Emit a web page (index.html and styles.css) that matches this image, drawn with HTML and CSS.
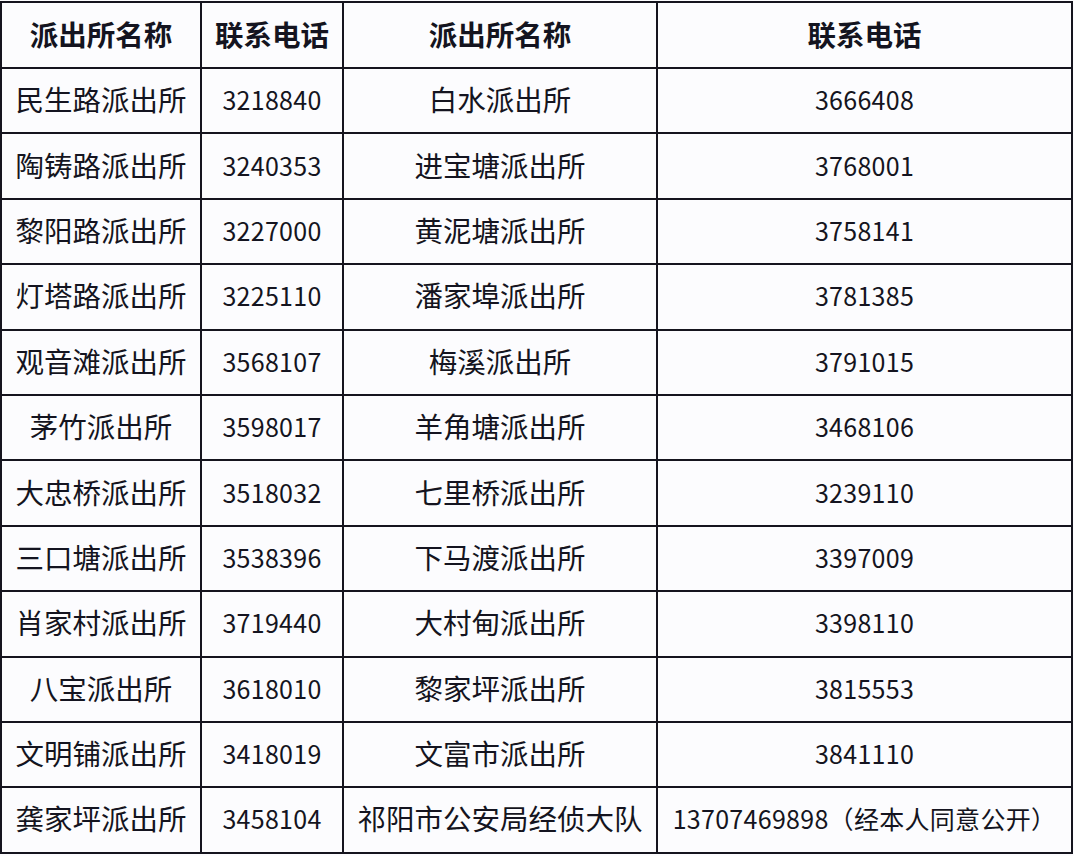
FILE: index.html
```html
<!DOCTYPE html>
<html lang="zh-CN">
<head>
<meta charset="utf-8">
<title>派出所联系电话</title>
<link rel="stylesheet" href="styles.css">
</head>
<body>
<table class="phone-table">
  <colgroup>
    <col class="c1"><col class="c2"><col class="c3"><col class="c4">
  </colgroup>
  <thead>
    <tr class="head-row">
      <th>派出所名称</th><th>联系电话</th><th>派出所名称</th><th>联系电话</th>
    </tr>
  </thead>
  <tbody>
    <tr><td>民生路派出所</td><td class="num">3218840</td><td>白水派出所</td><td class="num">3666408</td></tr>
    <tr><td>陶铸路派出所</td><td class="num">3240353</td><td>进宝塘派出所</td><td class="num">3768001</td></tr>
    <tr><td>黎阳路派出所</td><td class="num">3227000</td><td>黄泥塘派出所</td><td class="num">3758141</td></tr>
    <tr><td>灯塔路派出所</td><td class="num">3225110</td><td>潘家埠派出所</td><td class="num">3781385</td></tr>
    <tr><td>观音滩派出所</td><td class="num">3568107</td><td>梅溪派出所</td><td class="num">3791015</td></tr>
    <tr><td>茅竹派出所</td><td class="num">3598017</td><td>羊角塘派出所</td><td class="num">3468106</td></tr>
    <tr><td>大忠桥派出所</td><td class="num">3518032</td><td>七里桥派出所</td><td class="num">3239110</td></tr>
    <tr><td>三口塘派出所</td><td class="num">3538396</td><td>下马渡派出所</td><td class="num">3397009</td></tr>
    <tr><td>肖家村派出所</td><td class="num">3719440</td><td>大村甸派出所</td><td class="num">3398110</td></tr>
    <tr><td>八宝派出所</td><td class="num">3618010</td><td>黎家坪派出所</td><td class="num">3815553</td></tr>
    <tr><td>文明铺派出所</td><td class="num">3418019</td><td>文富市派出所</td><td class="num">3841110</td></tr>
    <tr><td>龚家坪派出所</td><td class="num">3458104</td><td>祁阳市公安局经侦大队</td><td class="num">13707469898（经本人同意公开）</td></tr>
  </tbody>
</table>
</body>
</html>
```

FILE: styles.css
```css
html, body {
  margin: 0;
  padding: 0;
  background: #fcfcfe;
}

body {
  padding-top: 1px;
  font-family: "Noto Sans CJK SC", "Noto Sans", sans-serif;
  color: #141420;
}

.phone-table {
  border-collapse: collapse;
  table-layout: fixed;
  width: 1071px;
  background: #fcfcfe;
}

.c1 { width: 200px; }
.c2 { width: 142px; }
.c3 { width: 314px; }
.c4 { width: 415px; }

.phone-table th,
.phone-table td {
  border: 2px solid #15141e;
  text-align: center;
  vertical-align: middle;
  padding: 0 0 3px 0;
  font-size: 28.5px;
  line-height: 30px;
  white-space: nowrap;
}

.phone-table th {
  font-weight: 700;
  height: 61px;
}

.phone-table td {
  font-weight: 400;
  height: 60.4px;
}

.phone-table td.num {
  font-size: 25px;
  letter-spacing: 0.3px;
}
```
